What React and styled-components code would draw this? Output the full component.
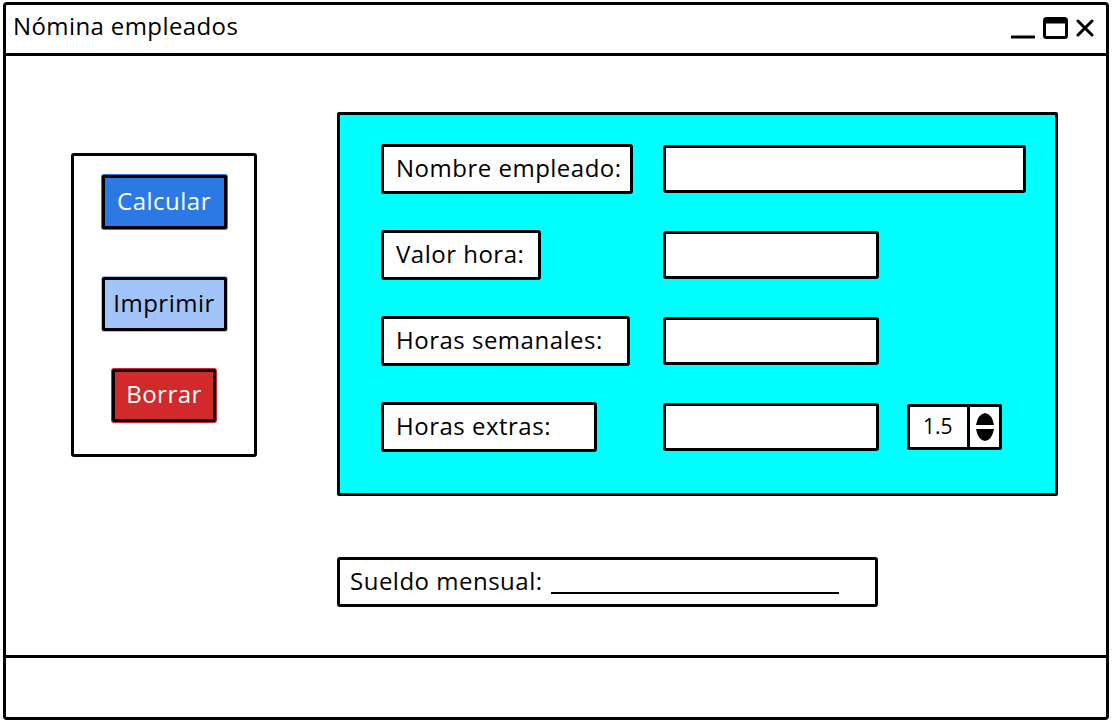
import React from 'react';
import styled, { createGlobalStyle } from 'styled-components';

const GlobalStyle = createGlobalStyle`
  html, body {
    margin: 0;
    padding: 0;
    background: #ffffff;
  }
  body {
    font-family: "Open Sans", "Liberation Sans", sans-serif;
    font-weight: 500;
    color: #000;
  }
  * {
    box-sizing: border-box;
  }
`;

const Window = styled.div`
  width: 1106px;
  height: 718px;
  margin: 2px 3px;
  border: 3px solid #000;
  border-radius: 4px;
  display: flex;
  flex-direction: column;
  background: #fff;
`;

const TitleBar = styled.div`
  height: 51px;
  flex-shrink: 0;
  border-bottom: 3px solid #000;
  display: flex;
  align-items: center;
  justify-content: space-between;
  padding: 0 12px 8px 7px;
`;

const Title = styled.span`
  font-size: 24px;
  letter-spacing: 0.4px;
`;

const Controls = styled.div`
  display: flex;
  align-items: center;
  gap: 8px;
  margin-top: 6px;
`;

const Content = styled.div`
  flex: 1;
  display: flex;
  align-items: flex-start;
  padding: 56px 0 0 65px;
`;

const SidePanel = styled.div`
  width: 186px;
  height: 304px;
  margin-top: 41px;
  border: 3px solid #000;
  border-radius: 3px;
  display: flex;
  flex-direction: column;
  align-items: center;
  padding-top: 19px;
`;

const ActionButton = styled.button`
  width: ${({ $w }) => $w}px;
  height: ${({ $h }) => $h || 54}px;
  margin-top: ${({ $mt }) => $mt || 0}px;
  background: ${({ $bg }) => $bg};
  color: ${({ $fg }) => $fg};
  border: 3px solid #000;
  border-radius: 2px;
  box-shadow: 0 0 0 1px ${({ $bg }) => $bg};
  font-family: "Open Sans", "Liberation Sans", sans-serif;
  font-weight: 500;
  font-size: 24px;
  letter-spacing: 0.5px;
  padding: 0 0 4px;
  display: flex;
  align-items: center;
  justify-content: center;
`;

const MainColumn = styled.div`
  margin-left: 80px;
  display: flex;
  flex-direction: column;
  gap: 61px;
`;

const FormPanel = styled.div`
  width: 721px;
  height: 384px;
  background: #00ffff;
  border: 3px solid #000;
  border-radius: 2px;
  display: grid;
  grid-template-columns: 282px auto;
  grid-auto-rows: 50px;
  row-gap: 36px;
  align-content: start;
  padding: 29px 0 0 41px;
`;

const Label = styled.div`
  width: ${({ $w }) => $w}px;
  height: 50px;
  background: #fff;
  border: 3px solid #000;
  border-radius: 3px;
  display: flex;
  align-items: center;
  padding: 0 0 3px 12px;
  font-size: 24px;
  letter-spacing: 0.5px;
  white-space: nowrap;
`;

const FieldCell = styled.div`
  display: flex;
  align-items: center;
  gap: 28px;
`;

const Input = styled.div`
  width: ${({ $w }) => $w}px;
  height: 48px;
  background: #fff;
  border: 3px solid #000;
  border-radius: 3px;
`;

const Spinner = styled.div`
  width: 95px;
  height: 46px;
  background: #fff;
  border: 3px solid #000;
  border-radius: 2px;
  display: flex;
  align-items: stretch;
`;

const SpinnerValue = styled.div`
  flex: 1;
  display: flex;
  align-items: center;
  padding: 0 0 2px 13px;
  font-size: 21px;
  border-right: 3px solid #000;
`;

const SpinnerArrows = styled.div`
  width: 29px;
  display: flex;
  align-items: center;
  justify-content: center;
`;

const TotalBox = styled.div`
  width: 541px;
  height: 50px;
  border: 3px solid #000;
  border-radius: 3px;
  display: flex;
  align-items: center;
  padding: 0 0 3px 10px;
  font-size: 24px;
  letter-spacing: 0.5px;
  white-space: nowrap;
`;

const Blank = styled.span`
  display: inline-block;
  width: 288px;
  height: 20px;
  margin-left: 8px;
  border-bottom: 2px solid #000;
  transform: translateY(3px);
`;

const StatusBar = styled.div`
  height: 62px;
  flex-shrink: 0;
  border-top: 3px solid #000;
`;

const fields = [
  { label: 'Nombre empleado:', labelW: 252, inputW: 363 },
  { label: 'Valor hora:', labelW: 160, inputW: 216 },
  { label: 'Horas semanales:', labelW: 249, inputW: 216 },
  { label: 'Horas extras:', labelW: 216, inputW: 216, spinner: '1.5' },
];

const App = () => (
  <>
    <GlobalStyle />
    <Window>
      <TitleBar>
        <Title>Nómina empleados</Title>
        <Controls>
          <svg width="24" height="24" viewBox="0 0 24 24">
            <path d="M1 21 H23" stroke="#000" strokeWidth="3" strokeLinecap="round" />
          </svg>
          <svg width="25" height="22" viewBox="0 0 25 22">
            <rect x="1.5" y="1.5" width="22" height="19" rx="2" fill="none" stroke="#000" strokeWidth="3" />
            <rect x="1.5" y="1.5" width="22" height="5" fill="#000" />
          </svg>
          <svg width="18" height="18" viewBox="0 0 18 18">
            <path d="M2 2 L16 16 M16 2 L2 16" stroke="#000" strokeWidth="3" strokeLinecap="round" />
          </svg>
        </Controls>
      </TitleBar>

      <Content>
        <SidePanel>
          <ActionButton $w={125} $bg="#2b79e3" $fg="#fff">Calcular</ActionButton>
          <ActionButton $w={125} $mt={48} $bg="#a1c5f9" $fg="#000">Imprimir</ActionButton>
          <ActionButton $w={104} $h={53} $mt={38} $bg="#d12a2a" $fg="#fff">Borrar</ActionButton>
        </SidePanel>

        <MainColumn>
          <FormPanel>
            {fields.map((f) => (
              <React.Fragment key={f.label}>
                <Label $w={f.labelW}>{f.label}</Label>
                <FieldCell>
                  <Input $w={f.inputW} />
                  {f.spinner && (
                    <Spinner>
                      <SpinnerValue>{f.spinner}</SpinnerValue>
                      <SpinnerArrows>
                        <svg width="22" height="32" viewBox="0 0 22 32">
                          <path d="M2 14 Q4 3 11 2 Q18 3 20 14 Z" fill="#000" />
                          <path d="M2 18 Q4 29 11 30 Q18 29 20 18 Z" fill="#000" />
                        </svg>
                      </SpinnerArrows>
                    </Spinner>
                  )}
                </FieldCell>
              </React.Fragment>
            ))}
          </FormPanel>

          <TotalBox>
            Sueldo mensual:<Blank />
          </TotalBox>
        </MainColumn>
      </Content>

      <StatusBar />
    </Window>
  </>
);

export default App;
